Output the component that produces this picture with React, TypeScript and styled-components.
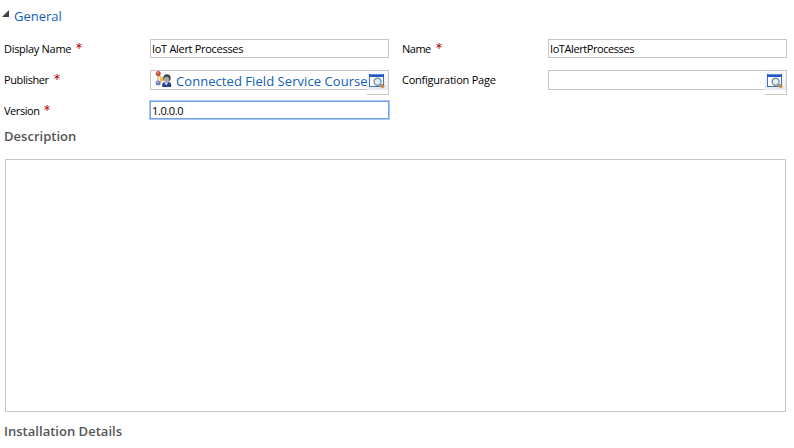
import React from 'react';
import styled, { createGlobalStyle } from 'styled-components';

const GlobalStyle = createGlobalStyle`
  * { box-sizing: border-box; }
  body { margin: 0; background: #fff; font-family: "Open Sans", "Noto Sans", sans-serif; }
`;

const Page = styled.main`
  width: 794px;
  height: 448px;
  overflow: hidden;
  padding: 5px 0 0 4px;
`;

const SectionHeader = styled.header`
  display: flex;
  height: 34px;
  margin-left: -2px;
`;

const Toggle = styled.svg`
  width: 8px;
  height: 8px;
  margin: 5px 4px 0 0;
`;

const SectionTitle = styled.h2`
  margin: 0;
  font-size: 13px;
  line-height: 22px;
  font-weight: 400;
  letter-spacing: 0;
  color: #1160b7;
`;

const Fields = styled.div`
  display: grid;
  grid-template-columns: 146px 239px 13px 146px 239px;
  grid-template-rows: 31px 31px 24px;
`;

const Label = styled.label<{ $col?: number; $track?: number }>`
  grid-column: ${p => p.$col ?? 1};
  display: flex;
  font-size: 11px;
  line-height: 20px;
  letter-spacing: ${p => p.$track ?? 0}px;
  white-space: nowrap;
  color: #000;
`;

const Star = styled.svg`
  flex: none;
  width: 6px;
  height: 6px;
  margin: 4px 0 0 5px;
`;

const TextField = styled.div<{ $col?: number; $track?: number }>`
  grid-column: ${p => p.$col ?? 2};
  height: 19px;
  border: 1px solid #c6c6c6;
  padding-left: 1px;
  font-size: 11px;
  line-height: 18px;
  letter-spacing: ${p => p.$track ?? 0}px;
  white-space: nowrap;
  color: #000;
`;

const FocusedField = styled(TextField)`
  width: 239px;
  box-shadow: 0 0 0 1px #a9c8fa;
  border-color: #789fdf;
  height: 18px;
`;

const Lookup = styled.div<{ $col?: number }>`
  grid-column: ${p => p.$col ?? 2};
  display: flex;
  height: 25px;
`;

const LookupValue = styled.div`
  display: flex;
  flex: 1;
  min-width: 0;
  height: 20px;
  border: 1px solid #c6c6c6;
  border-right: 0;
  padding-left: 4px;
  overflow: hidden;
`;

const LookupText = styled.span`
  flex: none;
  margin-left: 4px;
  font-size: 13px;
  line-height: 20px;
  letter-spacing: 0.06px;
  white-space: nowrap;
  color: #1160b7;
`;

const LookupButton = styled.button`
  width: 22px;
  height: 25px;
  border: 0;
  border-top: 1px solid #c6c6c6;
  border-right: 1px solid #c6c6c6;
  border-bottom: 1px solid #c6c6c6;
  padding: 1px 0 0 2px;
  background: linear-gradient(#fbfcfe, #e6eaf1 19px, #fff 19px);
  display: flex;
  align-items: flex-start;
`;

const Icon = styled.svg`
  flex: none;
  width: 17px;
  height: 17px;
`;

const Heading = styled.h3<{ $track: number }>`
  margin: 0;
  font-size: 13px;
  line-height: 22px;
  font-weight: 600;
  letter-spacing: ${p => p.$track}px;
  color: #555;
`;

const Description = styled.div`
  width: 781px;
  height: 253px;
  margin: 12px 0 8px 1px;
  border: 1px solid #c6c6c6;
`;

const Required = () => (
  <Star viewBox="0 0 6 6">
    <path d="M3 0v6M.4 1.3l5.2 3M5.6 1.3l-5.2 3" stroke="#b00000" strokeWidth=".9" fill="none" />
  </Star>
);

const PublisherIcon = () => (
  <Icon viewBox="0 0 17 17">
    <path d="M3 4v7M4 5l4 3-4 4" stroke="#d8a95c" strokeWidth="1.2" fill="none" />
    <circle cx="3.2" cy="2.5" r="2.5" fill="#bd4d35" />
    <circle cx="2.6" cy="1.7" r="1" fill="#eba08b" />
    <circle cx="6.9" cy="8" r="2.2" fill="#edb63b" />
    <circle cx="6.4" cy="7.3" r=".8" fill="#ffe08a" />
    <circle cx="3.2" cy="12" r="2.5" fill="#7180ba" />
    <circle cx="2.7" cy="11.2" r=".9" fill="#abb9e4" />
    <path d="M7.2 16v-2.2q0-2.5 2.8-2.8h3.6q2.6.3 2.6 2.8v2.2z" fill="#293f91" />
    <path d="m9 11.3 2.2 3.2 2.3-3.2z" fill="#d0dcf5" />
    <ellipse cx="12" cy="7" rx="3.7" ry="3.8" fill="#45474c" />
    <ellipse cx="11.5" cy="8.5" rx="2.5" ry="2.8" fill="#a8a9ad" />
  </Icon>
);

const LookupIcon = () => (
  <Icon viewBox="0 0 17 17">
    <rect x=".5" y="2.5" width="14" height="12" fill="#fff" stroke="#3f70c8" />
    <path d="M0 2h15v3H0z" fill="#2458b8" />
    <path d="M1 2.5h13" stroke="#5a8de0" />
    <circle cx="8.6" cy="9.8" r="3.5" fill="#e1f0f4" stroke="#7b9297" strokeWidth="1.4" />
    <path d="m11 12 1.7 1.7" stroke="#777" strokeWidth="1.5" />
    <path d="m13.4 11.8 2.5 2.5-2.3 2.3-2.4-2.3z" fill="#cf8235" />
  </Icon>
);

export default function App() {
  return (
    <>
      <GlobalStyle />
      <Page>
        <SectionHeader>
          <Toggle viewBox="0 0 8 8"><path d="M7 0v7H0z" fill="#444" /></Toggle>
          <SectionTitle>General</SectionTitle>
        </SectionHeader>
        <Fields>
          <Label $track={-0.3}>Display Name <Required /></Label>
          <TextField $track={-0.3}>IoT Alert Processes</TextField>
          <Label $col={4} $track={-0.5}>Name <Required /></Label>
          <TextField $col={5} $track={-0.42}>IoTAlertProcesses</TextField>
          <Label $track={-0.4}>Publisher <Required /></Label>
          <Lookup>
            <LookupValue>
              <PublisherIcon />
              <LookupText>Connected Field Service Course</LookupText>
            </LookupValue>
            <LookupButton aria-label="Look up publisher"><LookupIcon /></LookupButton>
          </Lookup>
          <Label $col={4} $track={-0.24}>Configuration Page</Label>
          <Lookup $col={5}>
            <LookupValue />
            <LookupButton aria-label="Look up configuration page"><LookupIcon /></LookupButton>
          </Lookup>
          <Label $track={-0.45}>Version <Required /></Label>
          <FocusedField $track={-0.4}>1.0.0.0</FocusedField>
        </Fields>
        <Heading $track={0.02}>Description</Heading>
        <Description />
        <Heading $track={0.02}>Installation Details</Heading>
      </Page>
    </>
  );
}
